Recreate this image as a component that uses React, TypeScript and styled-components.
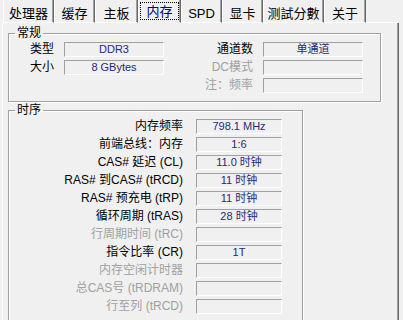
import styled, { createGlobalStyle } from "styled-components";

const GlobalStyle = createGlobalStyle`
  html, body {
    margin: 0;
    padding: 0;
    background: #f0f0f0;
  }
  body {
    font-family: "Liberation Sans", "Noto Sans CJK SC", sans-serif;
  }
`;

const CJK = `"Liberation Sans", "Noto Sans CJK SC", sans-serif`;

const tabs = [
  { label: "处理器", width: 51 },
  { label: "缓存", width: 41 },
  { label: "主板", width: 43 },
  { label: "内存", width: 43, active: true },
  { label: "SPD", width: 41 },
  { label: "显卡", width: 41 },
  { label: "测試分數", width: 61 },
  { label: "关于", width: 42 },
];

const timings = [
  { label: "内存频率", value: "798.1 MHz" },
  { label: "前端总线：内存", value: "1:6" },
  { label: "CAS# 延迟 (CL)", value: "11.0 时钟" },
  { label: "RAS# 到CAS# (tRCD)", value: "11 时钟" },
  { label: "RAS# 预充电 (tRP)", value: "11 时钟" },
  { label: "循环周期 (tRAS)", value: "28 时钟" },
  { label: "行周期时间 (tRC)", value: "", disabled: true },
  { label: "指令比率 (CR)", value: "1T" },
  { label: "内存空闲计时器", value: "", disabled: true },
  { label: "总CAS号 (tRDRAM)", value: "", disabled: true },
  { label: "行至列 (tRCD)", value: "", disabled: true },
];

export default function App() {
  return (
    <>
      <GlobalStyle />
      <Window>
        <TabStrip>
          {tabs.map((t) => (
            <Tab key={t.label} $width={t.width} $active={t.active}>
              {t.active ? <Focus>{t.label}</Focus> : t.label}
            </Tab>
          ))}
          <TabFiller />
        </TabStrip>

        <Panel>
          <Group $width={373}>
            <Legend>常规</Legend>
            <GeneralGrid>
              <Label>类型</Label>
              <ValueBox>DDR3</ValueBox>
              <Label>通道数</Label>
              <ValueBox>单通道</ValueBox>

              <Label>大小</Label>
              <ValueBox>8 GBytes</ValueBox>
              <Label $disabled>DC模式</Label>
              <ValueBox />

              <span />
              <span />
              <Label $disabled>注：频率</Label>
              <ValueBox />
            </GeneralGrid>
          </Group>

          <Group $width={295} $gapTop={1}>
            <Legend>时序</Legend>
            <TimingGrid>
              {timings.map((t) => (
                <TimingRow key={t.label}>
                  <Label $disabled={t.disabled} $pad={13}>
                    {t.label}
                  </Label>
                  <ValueBox>{t.value}</ValueBox>
                </TimingRow>
              ))}
            </TimingGrid>
          </Group>
        </Panel>
      </Window>
    </>
  );
}

const Window = styled.div`
  width: 403px;
  height: 320px;
  overflow: hidden;
  background: #f0f0f0;
  display: flex;
  flex-direction: column;
`;

const TabStrip = styled.div`
  display: flex;
  height: 23px;
  padding-left: 3px;
  width: 398px;
  box-sizing: border-box;
`;

const Tab = styled.div<{ $width: number; $active?: boolean }>`
  width: ${(p) => p.$width}px;
  box-sizing: border-box;
  display: flex;
  justify-content: center;
  align-items: flex-start;
  padding-top: ${(p) => (p.$active ? 2 : 6)}px;
  border-left: 1px solid #ffffff;
  border-right: 1px solid #696969;
  border-bottom: 1px solid ${(p) => (p.$active ? "#f0f0f0" : "#ffffff")};
  box-shadow: inset -1px 0 0 #a0a0a0;
  font-family: ${CJK};
  font-size: 13px;
  line-height: 16px;
  color: ${(p) => (p.$active ? "#000080" : "#000000")};
  white-space: nowrap;
`;

const Focus = styled.span`
  display: block;
  border: 1px dotted #000000;
  padding: 1px 5px 0;
  line-height: 15px;
`;

const TabFiller = styled.div`
  flex: 1;
  border-bottom: 1px solid #ffffff;
`;

const Panel = styled.div`
  flex: 1;
  width: 397px;
  margin-left: 2px;
  box-sizing: border-box;
  border-left: 1px solid #ffffff;
  border-right: 1px solid #696969;
  box-shadow: inset -1px 0 0 #a0a0a0;
  padding: 3px 0 0 5px;
  display: flex;
  flex-direction: column;
  align-items: flex-start;
`;

const Group = styled.fieldset<{ $width: number; $gapTop?: number }>`
  width: ${(p) => p.$width}px;
  box-sizing: border-box;
  margin: ${(p) => p.$gapTop ?? 0}px 0 0 0;
  padding: 2px 0 8px 0;
  min-width: 0;
  border: 1px solid #a0a0a0;
  box-shadow: 1px 1px 0 #ffffff, inset 1px 1px 0 #ffffff;
`;

const Legend = styled.legend`
  margin-left: 6px;
  padding: 0 2px;
  font-family: ${CJK};
  font-size: 12px;
  line-height: 14px;
  color: #000000;
`;

const GeneralGrid = styled.div`
  display: grid;
  grid-template-columns: 55px 100px 99px 100px;
  grid-auto-rows: 15px;
  row-gap: 3px;
`;

const TimingGrid = styled.div`
  display: flex;
  flex-direction: column;
  gap: 3px;
`;

const TimingRow = styled.div`
  display: grid;
  grid-template-columns: 187px 86px;
  height: 15px;
`;

const Label = styled.span<{ $disabled?: boolean; $pad?: number }>`
  text-align: right;
  padding-right: ${(p) => p.$pad ?? 10}px;
  font-family: ${CJK};
  font-size: 12px;
  line-height: 15px;
  white-space: nowrap;
  color: ${(p) => (p.$disabled ? "#a0a0a0" : "#000000")};
`;

const ValueBox = styled.div`
  box-sizing: border-box;
  height: 15px;
  border-top: 1px solid #a0a0a0;
  border-left: 1px solid #a0a0a0;
  border-bottom: 1px solid #ffffff;
  border-right: 1px solid #ffffff;
  text-align: center;
  font-family: ${CJK};
  font-size: 11px;
  line-height: 13px;
  color: #1e2a78;
  white-space: nowrap;
  overflow: hidden;
`;
